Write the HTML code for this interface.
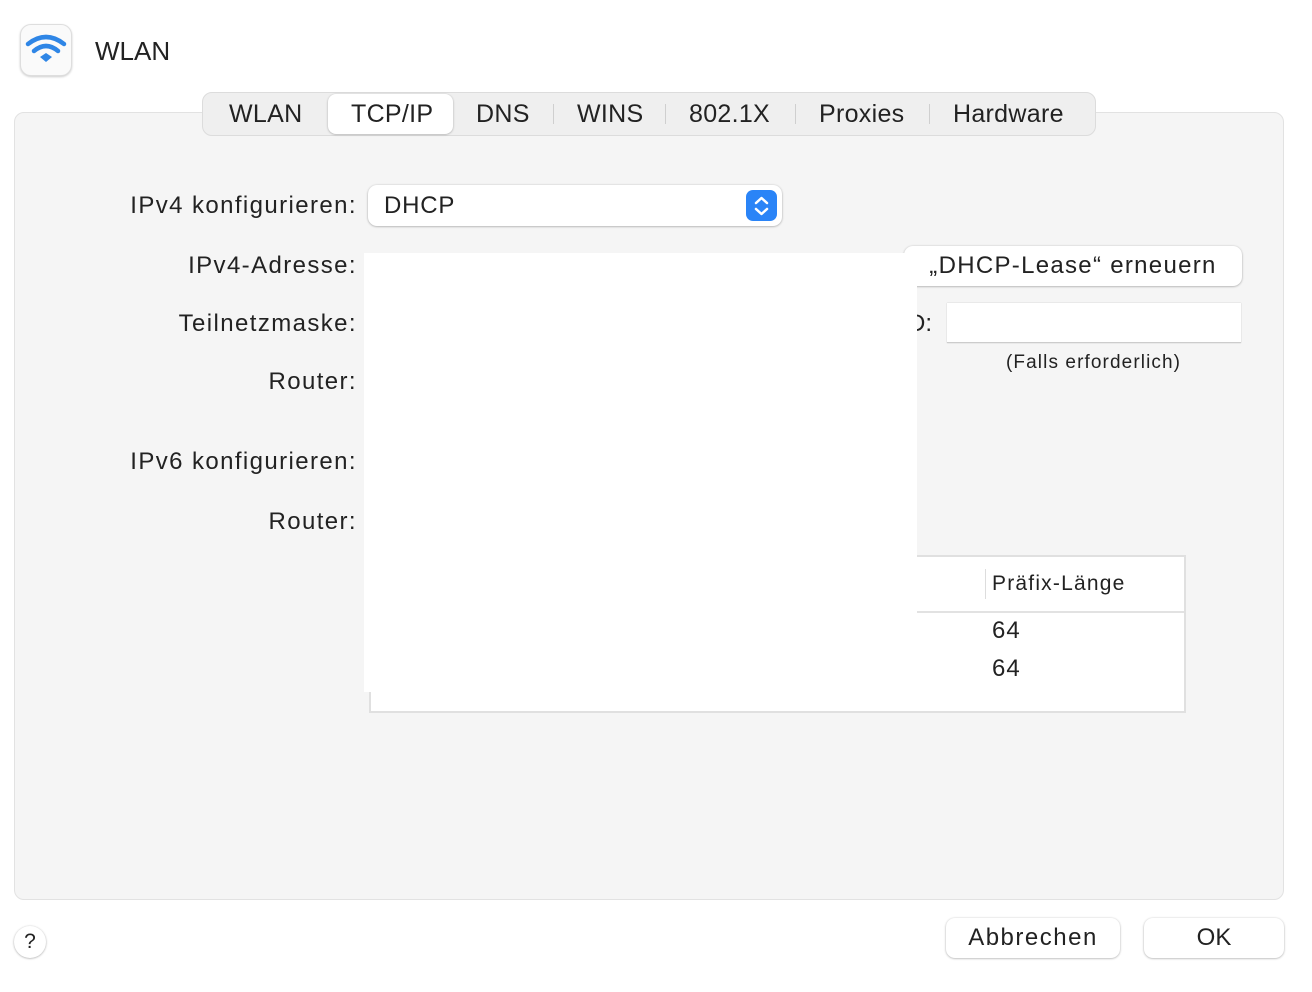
<!DOCTYPE html>
<html><head><meta charset="utf-8"><style>
*{box-sizing:border-box;margin:0;padding:0}
body{width:1312px;height:992px;background:#fff;font-family:"Liberation Sans",sans-serif;color:#222;position:relative;overflow:hidden}
.abs{position:absolute}
.lbl{position:absolute;right:955px;font-size:24px;white-space:nowrap;letter-spacing:1.4px}
.panel{left:14px;top:112px;width:1270px;height:788px;background:#f5f5f5;border:1px solid #e2e2e2;border-radius:10px}
.tabs{left:202px;top:92px;width:894px;height:44px;background:#efefef;border:1px solid #dcdcdc;border-radius:10px;display:flex;align-items:center;font-size:25px}
.tab{position:absolute;top:0;height:42px;line-height:42px;white-space:nowrap;letter-spacing:0.3px}
.sep{position:absolute;top:11px;width:1px;height:20px;background:#cfcfcf}
.btn{position:absolute;background:#fff;border-radius:9px;box-shadow:0 0.5px 2px rgba(0,0,0,.35);font-size:24px;text-align:center}
</style></head><body>
<div class="abs" style="left:20px;top:24px;width:52px;height:52px;border-radius:11px;background:#fafafa;border:1px solid #dedede;box-shadow:0 1px 2px rgba(0,0,0,.2)">
<svg width="50" height="50" viewBox="0 0 50 50" style="position:absolute;left:0;top:0"><g fill="none" stroke="#2f86e6" stroke-width="4.5" stroke-linecap="round"><path d="M7 19 Q25 5 43 19"/><path d="M13 26 Q25 16 37 26"/></g><path d="M19 32 L25 28 L31 32 L25 37 Z" fill="#2f86e6"/></svg></div>
<div class="abs" style="left:95px;top:36px;font-size:26px">WLAN</div>
<div class="abs panel"></div>
<div class="abs tabs">
<div class="tab" style="left:26px">WLAN</div>
<div class="abs" style="left:125px;top:1px;width:125px;height:40px;background:#fff;border-radius:8px;box-shadow:0 0.5px 2px rgba(0,0,0,.3)"></div>
<div class="tab" style="left:148px">TCP/IP</div>
<div class="tab" style="left:273px">DNS</div>
<div class="sep" style="left:350px"></div>
<div class="tab" style="left:374px">WINS</div>
<div class="sep" style="left:462px"></div>
<div class="tab" style="left:486px">802.1X</div>
<div class="sep" style="left:592px"></div>
<div class="tab" style="left:616px">Proxies</div>
<div class="sep" style="left:726px"></div>
<div class="tab" style="left:750px">Hardware</div>
</div>
<div class="lbl" style="top:192px">IPv4 konfigurieren:</div>
<div class="btn" style="left:368px;top:185px;width:414px;height:41px;text-align:left;padding-left:16px;line-height:41px;letter-spacing:0.8px">DHCP
<div class="abs" style="left:378px;top:5px;width:31px;height:31px;border-radius:7px;background:#2a84f7"><svg width="31" height="31"><path d="M10 13 L15.5 8 L21 13 M10 19 L15.5 24 L21 19" fill="none" stroke="#fff" stroke-width="2.5" stroke-linecap="round" stroke-linejoin="round"/></svg></div></div>
<div class="lbl" style="top:252px">IPv4-Adresse:</div>
<div class="lbl" style="top:310px">Teilnetzmaske:</div>
<div class="lbl" style="top:368px">Router:</div>
<div class="lbl" style="top:448px">IPv6 konfigurieren:</div>
<div class="lbl" style="top:508px">Router:</div>
<div class="btn" style="left:904px;top:246px;width:338px;height:40px;line-height:40px;letter-spacing:1.3px">„DHCP-Lease“ erneuern</div>
<div class="abs" style="left:908px;top:310px;font-size:24px">D:</div>
<div class="abs" style="left:947px;top:303px;width:294px;height:40px;background:#fff;border-bottom:1px solid #ccc;box-shadow:0 0 1px rgba(0,0,0,.25)"></div>
<div class="abs" style="left:1006px;top:352px;font-size:19px;letter-spacing:1.1px">(Falls erforderlich)</div>
<div class="abs" style="left:369px;top:555px;width:817px;height:158px;background:#fff;border:2px solid #e0e0e0">
<div class="abs" style="left:0;top:54px;width:813px;height:2px;background:#e2e2e2"></div>
<div class="abs" style="left:614px;top:12px;width:1px;height:30px;background:#ddd"></div>
<div class="abs" style="left:621px;top:15px;font-size:21px;letter-spacing:1.2px">Präfix-Länge</div>
<div class="abs" style="left:621px;top:60px;font-size:24px;letter-spacing:1px">64</div>
<div class="abs" style="left:621px;top:98px;font-size:24px;letter-spacing:1px">64</div>
</div>
<div class="abs" style="left:364px;top:253px;width:553px;height:439px;background:#fff"></div>
<div class="btn" style="left:14px;top:926px;width:32px;height:32px;border-radius:16px;line-height:32px;font-size:21px">?</div>
<div class="btn" style="left:946px;top:918px;width:174px;height:40px;line-height:40px;letter-spacing:1.5px">Abbrechen</div>
<div class="btn" style="left:1144px;top:918px;width:140px;height:40px;line-height:40px">OK</div>
</body></html>
